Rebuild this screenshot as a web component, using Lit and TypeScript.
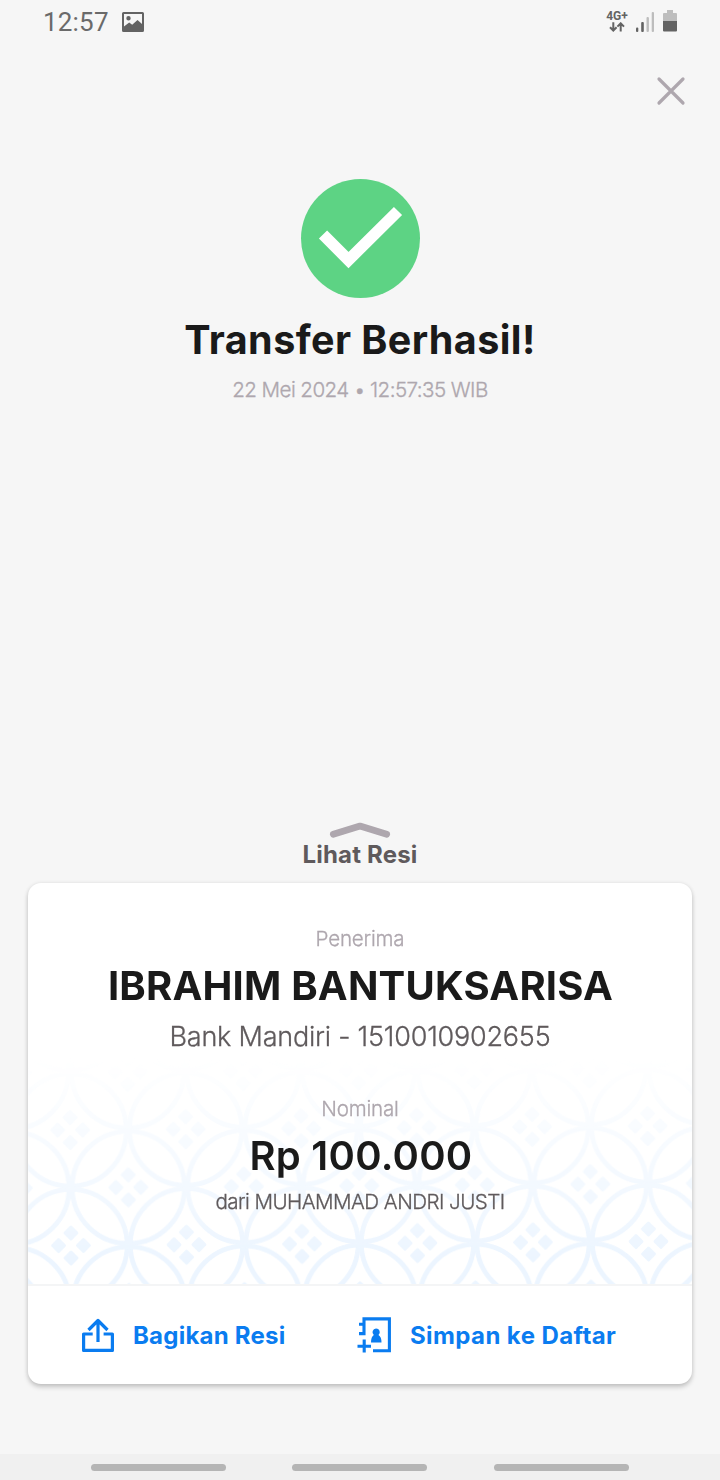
import { LitElement, html, css, svg } from 'lit';
import { customElement } from 'lit/decorators.js';

const STEP = 57.75;

@customElement('receipt-pattern')
class ReceiptPattern extends LitElement {
  static styles = css`
    :host { display: block; width: 100%; height: 100%; }
    svg { display: block; width: 100%; height: 100%; }
  `;
  render() {
    const motifs = [];
    for (let r = -5; r <= 2; r++) {
      for (let c = -2; c <= 13; c++) {
        if ((r + c) % 2 !== 0) continue;
        motifs.push(svg`<g transform="translate(${43 + c * STEP} ${187.5 + r * STEP})">
          <circle r="56.2" fill="none" stroke="#ecf5ff" stroke-width="4.8"/>
          <g transform="rotate(45)" fill="#ecf5ff">
            <rect x="-14.5" y="-14.5" width="11.4" height="11.4" rx="1.5"/>
            <rect x="3.1" y="-14.5" width="11.4" height="11.4" rx="1.5"/>
            <rect x="-14.5" y="3.1" width="11.4" height="11.4" rx="1.5"/>
            <rect x="3.1" y="3.1" width="11.4" height="11.4" rx="1.5"/>
          </g></g>`);
      }
    }
    return html`<svg viewBox="0 0 664 226">
      <defs>
        <linearGradient id="fade" x1="0" y1="0" x2="0" y2="1">
          <stop offset="0" stop-color="#fff" stop-opacity="0"/>
          <stop offset="0.9" stop-color="#fff"/>
        </linearGradient>
        <mask id="m"><rect width="664" height="226" fill="url(#fade)"/></mask>
      </defs>
      <g mask="url(#m)"><g transform="rotate(-0.4 43 187)">${motifs}</g></g>
    </svg>`;
  }
}

@customElement('app-root')
class AppRoot extends LitElement {
  static styles = css`
    :host {
      display: flex; flex-direction: column; width: 720px; height: 1480px;
      background: #f6f6f6; color: #1a1a1a; overflow: hidden;
      font-family: Inter, "Liberation Sans", sans-serif;
    }
    svg { display: block; flex: none; }
    .line { white-space: nowrap; text-align: center; }
    .status { display: flex; align-items: center; height: 43px; padding: 0 43px 0 43px; box-sizing: border-box; color: #636363; }
    .clock { font: 400 26px/44px Roboto, sans-serif; letter-spacing: 0.2px; margin-right: 13px; color: #6a6a6a; }
    .spacer { flex: 1; }
    .net { display: flex; flex-direction: column; align-items: center; width: 22px; margin: -1px 8px 0 0; }
    .net-label { font: 700 12px/12px Roboto, sans-serif; }
    .battery { margin-top: -1px; }
    .top { display: flex; justify-content: flex-end; height: 136px; padding: 33px 34px 0 0; box-sizing: border-box; }
    .check { display: flex; justify-content: center; height: 119px; }
    .title { font-size: 39.5px; font-weight: 700; line-height: 50px; margin-top: 17px; letter-spacing: .42px; }
    .date, .label, .bank, .from { -webkit-text-stroke: .3px currentColor; }
    .date { font-size: 20.6px; font-weight: 300; line-height: 30px; margin-top: 10px; color: #aea7ae; letter-spacing: -.58px; }
    .pull { display: flex; flex-direction: column; align-items: center; margin-top: 415px; }
    .see { font-size: 24px; font-weight: 700; line-height: 30px; color: #5f5a5c; margin-top: 2px; letter-spacing: .2px; }
    .card {
      display: flex; flex-direction: column; margin: 13px 28px 0; height: 501px; flex: none;
      border-radius: 13px; background: #fff;
      box-shadow: 0 3px 5px rgba(0,0,0,.2), 0 0 4px rgba(0,0,0,.07);
    }
    .body { display: grid; height: 401px; border-bottom: 2px solid #f4f5f6; }
    .art { grid-area: 1 / 1; align-self: end; height: 226px; }
    .info { grid-area: 1 / 1; z-index: 1; }
    .label { font-size: 20.6px; font-weight: 300; line-height: 30px; color: #aea7ae; letter-spacing: -.2px; }
    .penerima { margin-top: 41px; }
    .name { font-size: 40px; font-weight: 700; line-height: 50px; margin-top: 6.5px; padding-left: 1px; letter-spacing: .2px; }
    .bank { font-size: 27px; font-weight: 300; line-height: 40px; margin-top: 6px; color: #5f5a5c; letter-spacing: -.22px; }
    .nominal { margin-top: 37px; }
    .amount { font-size: 40px; font-weight: 600; line-height: 50px; margin-top: 7px; padding-left: 2px; letter-spacing: .25px; }
    .from { font-size: 20.6px; font-weight: 300; line-height: 30px; margin-top: 6.5px; color: #5f5a5c; letter-spacing: -.56px; }
    .actions { display: flex; align-items: center; height: 98px; color: #0a7cf0; padding-left: 52px; }
    .act { font-size: 24px; font-weight: 700; line-height: 30px; white-space: nowrap; padding-top: 2px; }
    .share { width: 152px; margin: 0 72px 0 17px; letter-spacing: .23px; }
    .save { margin-left: 19px; letter-spacing: .4px; }
    .nav { display: flex; justify-content: space-between; align-items: center; padding: 0 91px; height: 26px; margin-top: auto; box-sizing: border-box; background: #f0f0f0; }
    .pill { width: 135px; height: 7px; border-radius: 4px; background: #b5b5b5; }
    .mid { margin-right: 1px; }
  `;
  render() {
    return html`
      <div class="status">
        <span class="clock">12:57</span>
        <svg width="22" height="20" viewBox="0 0 22 20"><path fill="#636363" fill-rule="evenodd" d="M1.500 0h19Q22 0 22 1.500v17Q22 20 20.500 20h-19Q0 20 0 18.500v-17Q0 0 1.500 0zM2 2v12.500l5.200-4 3 2.300 5.300-4.800 4.500 4V2zM6.500 4a2.200 2.200 0 1 1 0 4.400 2.200 2.200 0 0 1 0-4.400z"/></svg>
        <span class="spacer"></span>
        <div class="net">
          <span class="net-label">4G+</span>
          <svg width="16" height="10" viewBox="0 0 16 10" fill="none" stroke="#636363" stroke-width="2"><path d="M4.300 .3v8M1 5.200l3.300 3.300 3.300-3.300M11.700 9.500v-8M8.400 4.600l3.300-3.300 3.300 3.300"/></svg>
        </div>
        <svg width="18" height="20" viewBox="0 0 18 20"><rect y="15.500" width="2.300" height="4.500" rx="1" fill="#636363"/><rect x="5.200" y="10" width="2.600" height="10" rx="1" fill="#636363"/><rect x="10.500" y="5" width="2.400" height="15" rx="1" fill="#bdbdbd"/><rect x="15.700" y="0" width="2.300" height="20" rx="1" fill="#bdbdbd"/></svg>
        <svg class="battery" width="23" height="22" viewBox="0 0 23 22"><path fill="#bdbdbd" d="M13 0h6v3H22q1 0 1 1v7H9V4q0-1 1-1h3z"/><path fill="#636363" d="M9 11h14v9.500q0 1-1 1H10q-1 0-1-1z"/></svg>
      </div>
      <div class="top"><svg width="30" height="30" viewBox="0 0 30 30"><path d="M3 3l24 24M27 3L3 27" stroke="#aea7ae" stroke-width="3.200" stroke-linecap="round"/></svg></div>
      <div class="check"><svg width="119" height="119" viewBox="0 0 119 119"><circle cx="59.500" cy="59.500" r="59.500" fill="#5dd384"/><path d="M22 55.500L47.500 81 97 32" fill="none" stroke="#fff" stroke-width="11.600"/></svg></div>
      <div class="line title">Transfer Berhasil!</div>
      <div class="line date">22 Mei 2024 • 12:57:35 WIB</div>
      <div class="pull">
        <svg width="62" height="18" viewBox="0 0 62 18"><path d="M4.300 14.300L31 6 57.700 14.300" fill="none" stroke="#aea7ae" stroke-width="6.700" stroke-linecap="round" stroke-linejoin="round"/></svg>
        <div class="line see">Lihat Resi</div>
      </div>
      <div class="card">
        <div class="body">
          <receipt-pattern class="art"></receipt-pattern>
          <div class="info">
            <div class="line label penerima">Penerima</div>
            <div class="line name">IBRAHIM BANTUKSARISA</div>
            <div class="line bank">Bank Mandiri - 1510010902655</div>
            <div class="line label nominal">Nominal</div>
            <div class="line amount">Rp 100.000</div>
            <div class="line from">dari MUHAMMAD ANDRI JUSTI</div>
          </div>
        </div>
        <div class="actions">
          <svg width="36" height="36" viewBox="0 0 36 36" fill="none" stroke="#0a7cf0" stroke-width="3.200" stroke-linejoin="round"><path d="M12.700 17H3.600v16.400h28.800V17h-8.800M18 25V4M8.500 13L18 3.500l9.500 9.500"/></svg>
          <span class="act share">Bagikan Resi</span>
          <svg width="34" height="36" viewBox="0 0 34 36"><path d="M2 7.300h5V1.900h25.400v31.800H16M2 16.600h5V7M7.200 22.500v13M.5 29.300h13.500" fill="none" stroke="#0a7cf0" stroke-width="3.100"/><path fill="#0a7cf0" d="M19 11.500a3.700 3.700 0 0 1 2.500 6.500q3 1.800 3 7.500H14q0-5.700 2.800-7.500a3.700 3.700 0 0 1 2.200-6.500z"/></svg>
          <span class="act save">Simpan ke Daftar</span>
        </div>
      </div>
      <div class="nav"><span class="pill"></span><span class="pill mid"></span><span class="pill"></span></div>`;
  }
}
